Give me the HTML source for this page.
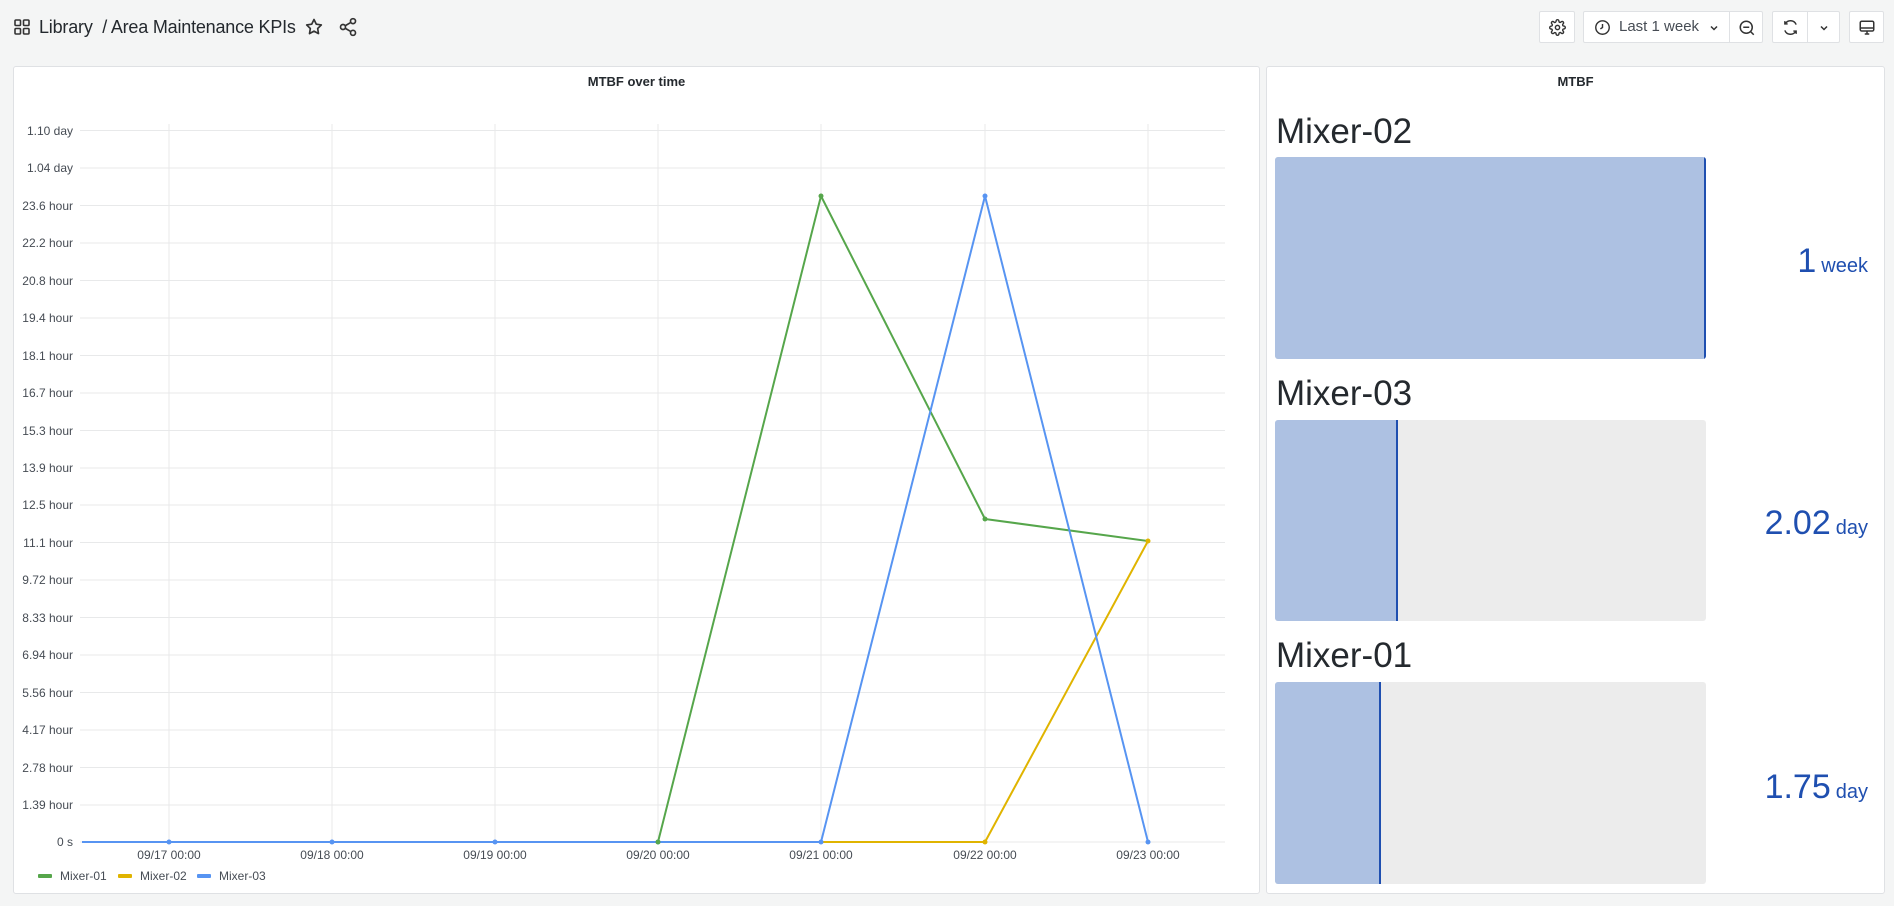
<!DOCTYPE html>
<html><head><meta charset="utf-8"><style>
*{box-sizing:border-box;margin:0;padding:0}
body{width:1894px;height:906px;background:#f4f5f5;font-family:"Liberation Sans",sans-serif;position:relative;overflow:hidden;color:#24292e}
.abs{position:absolute}
.panel{position:absolute;background:#fff;border:1px solid #dfe1e4;border-radius:3px}
.btn{position:absolute;top:11px;height:32px;background:#fff;border:1px solid #dfe1e4;border-radius:2px}
.bar{position:absolute;left:1275px;width:431px;background:#ececec;border-radius:3px;overflow:hidden}
.fill{position:absolute;left:0;top:0;bottom:0;background:#adc1e2;border-right:2px solid #1f4fb0}
.name{position:absolute;left:1276px;font-size:35px;color:#24292e}
.val{position:absolute;right:26px;font-size:34px;color:#1f4fb0}
.val span{font-size:20px;margin-left:5px}
.hdr{position:absolute;left:13px;top:14px;display:flex;align-items:center;height:26px}
</style></head><body>
<div class="hdr">
<svg width="18" height="18" viewBox="0 0 18 18" fill="none" stroke="#333" stroke-width="1.6"><rect x="2" y="2" width="5.5" height="5.5" rx="1"/><rect x="10.5" y="2" width="5.5" height="5.5" rx="1"/><rect x="2" y="10.5" width="5.5" height="5.5" rx="1"/><rect x="10.5" y="10.5" width="5.5" height="5.5" rx="1"/></svg>
<div style="margin-left:8px;font-size:18px;color:#24292e;letter-spacing:-0.2px;white-space:nowrap">Library&nbsp; / Area Maintenance KPIs</div>
<svg style="margin-left:8px" width="20" height="20" viewBox="0 0 24 24" fill="none" stroke="#333" stroke-width="2" stroke-linejoin="round"><path d="M12 3l2.7 5.6 6.1.9-4.4 4.3 1 6.1L12 17l-5.4 2.9 1-6.1L3.2 9.5l6.1-.9z"/></svg>
<svg style="margin-left:14px" width="20" height="20" viewBox="0 0 24 24" fill="none" stroke="#333" stroke-width="2"><circle cx="18" cy="5" r="3"/><circle cx="6" cy="12" r="3"/><circle cx="18" cy="19" r="3"/><path d="M8.6 13.5l6.8 4M15.4 6.5l-6.8 4"/></svg>
</div>

<div class="btn" style="left:1539px;width:36px"><svg style="position:absolute;left:9px;top:7px" width="17" height="17" viewBox="0 0 24 24" fill="none" stroke="#333" stroke-width="2"><circle cx="12" cy="12" r="3"/><path d="M19.4 15a1.7 1.7 0 0 0 .3 1.8l.1.1a2 2 0 1 1-2.8 2.8l-.1-.1a1.7 1.7 0 0 0-2.9 1.2V21a2 2 0 1 1-4 0v-.1a1.7 1.7 0 0 0-2.9-1.2l-.1.1a2 2 0 1 1-2.8-2.8l.1-.1A1.7 1.7 0 0 0 3 14.1H3a2 2 0 1 1 0-4h.1a1.7 1.7 0 0 0 1.2-2.9l-.1-.1a2 2 0 1 1 2.8-2.8l.1.1A1.7 1.7 0 0 0 10 3.1V3a2 2 0 1 1 4 0v.1a1.7 1.7 0 0 0 2.9 1.2l.1-.1a2 2 0 1 1 2.8 2.8l-.1.1a1.7 1.7 0 0 0 1.2 2.9H21a2 2 0 1 1 0 4h-.1a1.7 1.7 0 0 0-1.5 1z"/></svg></div>
<div class="btn" style="left:1583px;width:180px">
<svg style="position:absolute;left:10px;top:7px" width="17" height="17" viewBox="0 0 24 24" fill="none" stroke="#333" stroke-width="2"><circle cx="12" cy="12" r="9.5"/><path d="M12 7v5l-3 2"/></svg>
<div style="position:absolute;left:35px;top:6px;font-size:15px;color:#464c54">Last 1 week</div>
<svg style="position:absolute;left:125px;top:11px" width="10" height="10" viewBox="0 0 10 10" fill="none" stroke="#333" stroke-width="1.5"><path d="M2 3.5l3 3 3-3"/></svg>
<div style="position:absolute;left:145px;top:0;bottom:0;border-left:1px solid #dfe1e4"></div>
<svg style="position:absolute;left:154px;top:7px" width="18" height="18" viewBox="0 0 24 24" fill="none" stroke="#333" stroke-width="2"><circle cx="11" cy="11" r="8"/><path d="M7 11h8M17 17l4 4"/></svg>
</div>
<div class="btn" style="left:1772px;width:68px">
<svg style="position:absolute;left:9px;top:7px" width="17" height="17" viewBox="0 0 24 24" fill="none" stroke="#333" stroke-width="2"><path d="M20 8a8.5 8.5 0 0 0-15.5-1M4 16a8.5 8.5 0 0 0 15.5 1M4 3v4h4M20 21v-4h-4"/></svg>
<div style="position:absolute;left:34px;top:0;bottom:0;border-left:1px solid #dfe1e4"></div>
<svg style="position:absolute;left:46px;top:11px" width="10" height="10" viewBox="0 0 10 10" fill="none" stroke="#333" stroke-width="1.5"><path d="M2 3.5l3 3 3-3"/></svg>
</div>
<div class="btn" style="left:1849px;width:35px"><svg style="position:absolute;left:8px;top:7px" width="18" height="18" viewBox="0 0 24 24" fill="none" stroke="#333" stroke-width="2"><rect x="3" y="3" width="18" height="13" rx="2"/><path d="M3 12h18M9 20h6M12 16v4"/></svg></div>

<div class="panel" style="left:13px;top:66px;width:1247px;height:828px"></div>
<div class="abs" style="left:13px;top:74px;width:1247px;text-align:center;font-size:13px;font-weight:bold;color:#24292e">MTBF over time</div>
<svg class="abs" style="left:0;top:0" width="1260" height="906" font-family="Liberation Sans, sans-serif" font-size="12" fill="#464c54">
<g stroke="#e8e9ea" stroke-width="1">
<line x1="169" y1="124" x2="169" y2="842"/><line x1="332" y1="124" x2="332" y2="842"/><line x1="495" y1="124" x2="495" y2="842"/><line x1="658" y1="124" x2="658" y2="842"/><line x1="821" y1="124" x2="821" y2="842"/><line x1="985" y1="124" x2="985" y2="842"/><line x1="1148" y1="124" x2="1148" y2="842"/>
</g>
<g text-anchor="end">
<text x="73" y="135">1.10 day</text><text x="73" y="172">1.04 day</text><text x="73" y="210">23.6 hour</text><text x="73" y="247">22.2 hour</text><text x="73" y="285">20.8 hour</text><text x="73" y="322">19.4 hour</text><text x="73" y="360">18.1 hour</text><text x="73" y="397">16.7 hour</text><text x="73" y="435">15.3 hour</text><text x="73" y="472">13.9 hour</text><text x="73" y="509">12.5 hour</text><text x="73" y="547">11.1 hour</text><text x="73" y="584">9.72 hour</text><text x="73" y="622">8.33 hour</text><text x="73" y="659">6.94 hour</text><text x="73" y="697">5.56 hour</text><text x="73" y="734">4.17 hour</text><text x="73" y="772">2.78 hour</text><text x="73" y="809">1.39 hour</text><text x="73" y="846">0 s</text>
</g>
<g stroke="#e8e9ea">
<line x1="80" y1="130.5" x2="1225" y2="130.5"/><line x1="80" y1="168" x2="1225" y2="168"/><line x1="80" y1="205.5" x2="1225" y2="205.5"/><line x1="80" y1="243" x2="1225" y2="243"/><line x1="80" y1="280.5" x2="1225" y2="280.5"/><line x1="80" y1="318" x2="1225" y2="318"/><line x1="80" y1="355.5" x2="1225" y2="355.5"/><line x1="80" y1="393" x2="1225" y2="393"/><line x1="80" y1="430.5" x2="1225" y2="430.5"/><line x1="80" y1="468" x2="1225" y2="468"/><line x1="80" y1="505" x2="1225" y2="505"/><line x1="80" y1="542.5" x2="1225" y2="542.5"/><line x1="80" y1="580" x2="1225" y2="580"/><line x1="80" y1="617.5" x2="1225" y2="617.5"/><line x1="80" y1="655" x2="1225" y2="655"/><line x1="80" y1="692.5" x2="1225" y2="692.5"/><line x1="80" y1="730" x2="1225" y2="730"/><line x1="80" y1="767.5" x2="1225" y2="767.5"/><line x1="80" y1="805" x2="1225" y2="805"/><line x1="80" y1="842" x2="1225" y2="842"/>
</g>
<g text-anchor="middle">
<text x="169" y="859">09/17 00:00</text><text x="332" y="859">09/18 00:00</text><text x="495" y="859">09/19 00:00</text><text x="658" y="859">09/20 00:00</text><text x="821" y="859">09/21 00:00</text><text x="985" y="859">09/22 00:00</text><text x="1148" y="859">09/23 00:00</text>
</g>
<g fill="none" stroke-width="2" stroke-linejoin="round">
<polyline stroke="#56a64b" points="82,842 658,842 821,196 985,519 1148,541"/>
<polyline stroke="#e0b400" points="821,842 985,842 1148,541"/>
<polyline stroke="#5794f2" points="82,842 821,842 985,196 1148,842"/>
</g>
<g fill="#5794f2"><circle cx="169" cy="842" r="2.5"/><circle cx="332" cy="842" r="2.5"/><circle cx="495" cy="842" r="2.5"/><circle cx="658" cy="842" r="2.5"/><circle cx="821" cy="842" r="2.5"/><circle cx="985" cy="196" r="2.5"/><circle cx="1148" cy="842" r="2.5"/></g>
<circle cx="821" cy="196" r="2.5" fill="#56a64b"/><circle cx="985" cy="519" r="2.5" fill="#56a64b"/><circle cx="658" cy="842" r="2.5" fill="#56a64b"/>
<circle cx="985" cy="842" r="2.5" fill="#e0b400"/><circle cx="1148" cy="541" r="2.5" fill="#e0b400"/>
<rect x="38" y="874" width="14" height="4" rx="1" fill="#56a64b"/><text x="60" y="880">Mixer-01</text>
<rect x="118" y="874" width="14" height="4" rx="1" fill="#e0b400"/><text x="140" y="880">Mixer-02</text>
<rect x="197" y="874" width="14" height="4" rx="1" fill="#5794f2"/><text x="219" y="880">Mixer-03</text>
</svg>

<div class="panel" style="left:1266px;top:66px;width:619px;height:828px"></div>
<div class="abs" style="left:1266px;top:74px;width:619px;text-align:center;font-size:13px;font-weight:bold;color:#24292e">MTBF</div>
<div class="name" style="top:112px">Mixer-02</div>
<div class="bar" style="top:157px;height:202px"><div class="fill" style="width:431px"></div></div>
<div class="val" style="top:242px">1<span>week</span></div>
<div class="name" style="top:374px">Mixer-03</div>
<div class="bar" style="top:420px;height:201px"><div class="fill" style="width:123px"></div></div>
<div class="val" style="top:504px">2.02<span>day</span></div>
<div class="name" style="top:636px">Mixer-01</div>
<div class="bar" style="top:682px;height:202px"><div class="fill" style="width:106px"></div></div>
<div class="val" style="top:768px">1.75<span>day</span></div>
</body></html>
